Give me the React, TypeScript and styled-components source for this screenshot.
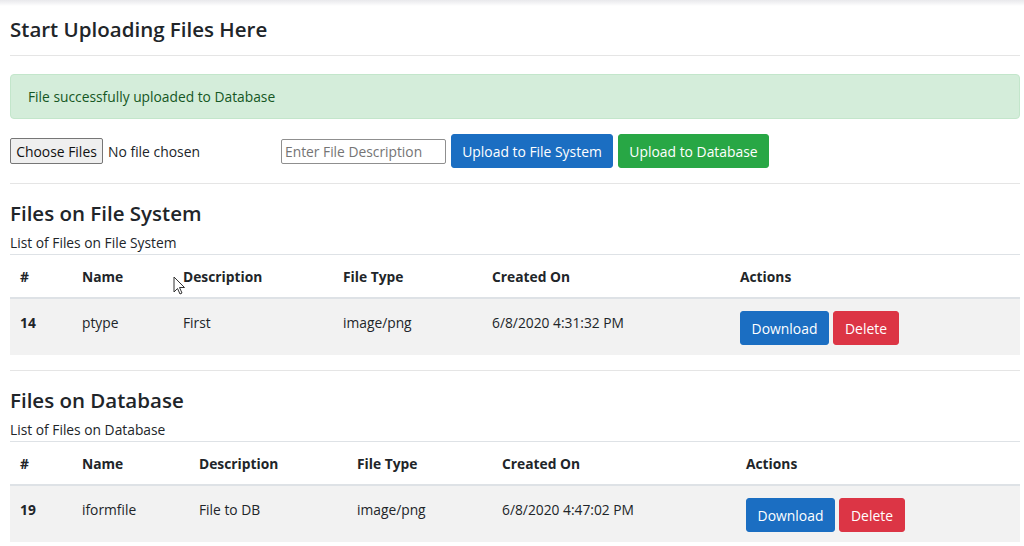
import React from "react";
import styled, { createGlobalStyle } from "styled-components";

const Global = createGlobalStyle`
  html, body { margin: 0; padding: 0; background: #fff; }
  body {
    font-family: "Open Sans", "Noto Sans", Arial, sans-serif;
    color: #212529;
    font-size: 13.8px;
  }
  * { box-sizing: border-box; }
`;

const TopShade = styled.div`
  height: 6px;
  background: linear-gradient(#e9e9ec 0, #f3f3f5 3px, #fff 6px);
`;

const Page = styled.div`
  width: 1010px;
  margin-left: 10px;
  position: relative;
`;

const Title = styled.h1`
  margin: 0;
  font-size: 20.5px;
  font-weight: 600;
  line-height: 26px;
  padding-top: 10px;
`;

const Rule = styled.hr<{ $top: number; $bottom: number }>`
  border: 0;
  border-top: 1px solid #e5e5e5;
  margin: ${(p) => p.$top}px 0 ${(p) => p.$bottom}px;
`;

const Alert = styled.div`
  height: 45px;
  background: #d4edda;
  border: 1px solid #c3e6cb;
  border-radius: 4px;
  color: #155724;
  display: flex;
  align-items: center;
  padding: 0 17px;
  font-size: 13.8px;
`;

const UploadRow = styled.div`
  margin-top: 15px;
  display: flex;
  align-items: center;
  height: 34px;
`;

const FileInput = styled.div`
  width: 271px;
  display: flex;
  align-items: center;
  gap: 5px;
  font-size: 13.9px;
`;

const ChooseButton = styled.div`
  width: 93px;
  height: 26px;
  background: #efefef;
  border: 1px solid #767676;
  border-radius: 2px;
  display: flex;
  align-items: center;
  justify-content: center;
  font-size: 13.9px;
  color: #111;
`;

const TextInput = styled.input`
  width: 165px;
  height: 25px;
  border: 1px solid #8f8f8f;
  border-radius: 2px;
  padding: 0 3px;
  font-family: inherit;
  font-size: 13.8px;
  margin-right: 5px;
  &::placeholder { color: #757575; }
`;

const Btn = styled.button<{ $bg: string; $w: number }>`
  width: ${(p) => p.$w}px;
  height: 34px;
  background: ${(p) => p.$bg};
  border: 1px solid ${(p) => p.$bg};
  border-radius: 3px;
  color: #fff;
  font-family: inherit;
  font-size: 13.9px;
  padding: 0;
  margin-right: 5px;
  display: inline-flex;
  align-items: center;
  justify-content: center;
`;

const SectionTitle = styled.h2`
  margin: 0;
  font-size: 20.5px;
  font-weight: 600;
  line-height: 26px;
  padding-top: 16px;
`;

const Caption = styled.div`
  font-size: 13.8px;
  line-height: 22px;
  margin-top: 6px;
`;

const Table = styled.table`
  width: 1010px;
  border-collapse: collapse;
  table-layout: fixed;
  border-top: 1px solid #dee2e6;
`;

const Th = styled.th<{ $w?: number }>`
  ${(p) => (p.$w ? `width: ${p.$w}px;` : "")}
  text-align: left;
  font-weight: 700;
  font-size: 13.8px;
  padding: 11px 10px 10px;
  line-height: 21px;
  border-bottom: 2px solid #dee2e6;
`;

const Row = styled.tr`
  background: #f2f2f2;
`;

const Td = styled.td<{ $bold?: boolean }>`
  vertical-align: top;
  padding: 13px 10px 10px;
  font-size: 13.8px;
  line-height: 22px;
  font-weight: ${(p) => (p.$bold ? 700 : 400)};
`;

const Actions = styled.div`
  display: flex;
  gap: 4px;
  margin-top: -1px;
`;

const ActionBtn = styled(Btn)`
  margin-right: 0;
`;

const Cursor = styled.svg`
  position: absolute;
  left: 163px;
  top: 270px;
`;

type TableData = {
  widths: number[];
  id: string;
  name: string;
  desc: string;
  type: string;
  created: string;
};

function FilesTable({ d }: { d: TableData }) {
  const heads = ["#", "Name", "Description", "File Type", "Created On", "Actions"];
  return (
    <Table>
      <thead>
        <tr>
          {heads.map((h, i) => (
            <Th key={h} $w={d.widths[i]}>
              {h}
            </Th>
          ))}
        </tr>
      </thead>
      <tbody>
        <Row>
          <Td $bold>{d.id}</Td>
          <Td>{d.name}</Td>
          <Td>{d.desc}</Td>
          <Td>{d.type}</Td>
          <Td>{d.created}</Td>
          <Td>
            <Actions>
              <ActionBtn $bg="#1b6ec2" $w={89}>Download</ActionBtn>
              <ActionBtn $bg="#dc3545" $w={66}>Delete</ActionBtn>
            </Actions>
          </Td>
        </Row>
      </tbody>
    </Table>
  );
}

export default function App() {
  return (
    <>
      <Global />
      <TopShade />
      <Page>
        <Title>Start Uploading Files Here</Title>
        <Rule $top={13} $bottom={18} />
        <Alert>File successfully uploaded to Database</Alert>
        <UploadRow>
          <FileInput>
            <ChooseButton>Choose Files</ChooseButton>
            <span>No file chosen</span>
          </FileInput>
          <TextInput placeholder="Enter File Description" />
          <Btn $bg="#1b6ec2" $w={162}>Upload to File System</Btn>
          <Btn $bg="#28a745" $w={151}>Upload to Database</Btn>
        </UploadRow>
        <Rule $top={15} $bottom={0} />
        <SectionTitle>Files on File System</SectionTitle>
        <Caption>List of Files on File System</Caption>
        <FilesTable
          d={{
            widths: [62, 101, 160, 149, 248],
            id: "14",
            name: "ptype",
            desc: "First",
            type: "image/png",
            created: "6/8/2020 4:31:32 PM",
          }}
        />
        <Rule $top={15} $bottom={0} />
        <SectionTitle>Files on Database</SectionTitle>
        <Caption>List of Files on Database</Caption>
        <FilesTable
          d={{
            widths: [62, 117, 158, 145, 244],
            id: "19",
            name: "iformfile",
            desc: "File to DB",
            type: "image/png",
            created: "6/8/2020 4:47:02 PM",
          }}
        />
        <Cursor width="13" height="20" viewBox="0 0 13 20">
          <path
            d="M1 1 L1 16 L4.5 12.5 L7 18 L9 17 L6.5 11.5 L11.5 11.5 Z"
            fill="#fff"
            stroke="#333"
            strokeWidth="1"
            strokeLinejoin="round"
          />
        </Cursor>
      </Page>
    </>
  );
}
